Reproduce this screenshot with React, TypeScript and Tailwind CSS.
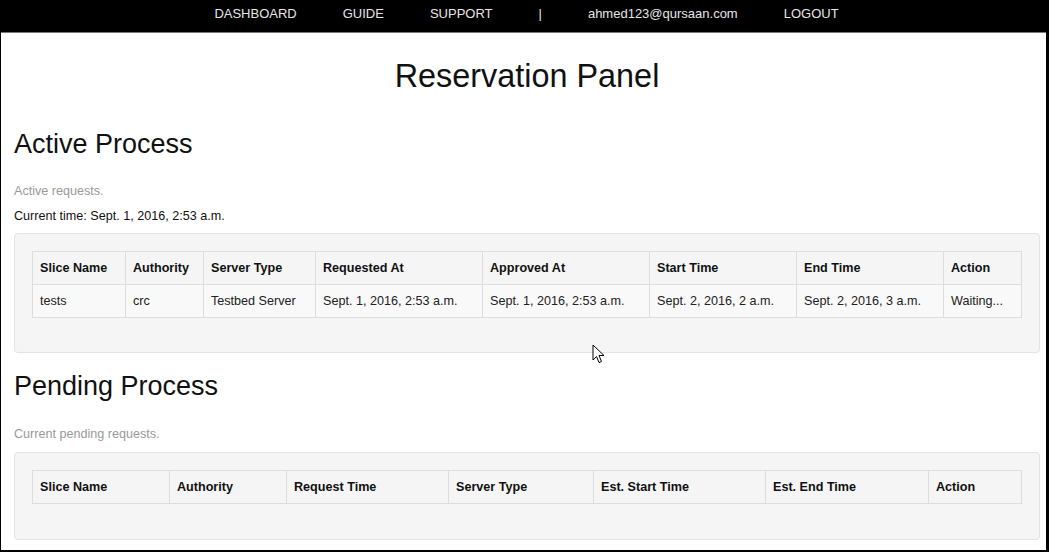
import React from 'react';

const navItems = ['DASHBOARD', 'GUIDE', 'SUPPORT', '|', 'ahmed123@qursaan.com', 'LOGOUT'];

const activeCols = [
    { label: 'Slice Name', w: 'w-[93px]' },
    { label: 'Authority', w: 'w-[78px]' },
    { label: 'Server Type', w: 'w-[112px]' },
    { label: 'Requested At', w: 'w-[167px]' },
    { label: 'Approved At', w: 'w-[167px]' },
    { label: 'Start Time', w: 'w-[147px]' },
    { label: 'End Time', w: 'w-[147px]' },
    { label: 'Action', w: 'w-[78px]' },
];

const activeRows = [
    ['tests', 'crc', 'Testbed Server', 'Sept. 1, 2016, 2:53 a.m.', 'Sept. 1, 2016, 2:53 a.m.', 'Sept. 2, 2016, 2 a.m.', 'Sept. 2, 2016, 3 a.m.', 'Waiting...'],
];

const pendingCols = [
    { label: 'Slice Name', w: 'w-[137px]' },
    { label: 'Authority', w: 'w-[117px]' },
    { label: 'Request Time', w: 'w-[162px]' },
    { label: 'Server Type', w: 'w-[145px]' },
    { label: 'Est. Start Time', w: 'w-[172px]' },
    { label: 'Est. End Time', w: 'w-[163px]' },
    { label: 'Action', w: 'w-[93px]' },
];

type Col = { label: string; w: string };

const DataTable = ({ cols, rows }: { cols: Col[]; rows: string[][] }) => (
    <table className="table-fixed border-collapse w-[989px] text-[12.6px] leading-[18px]">
        <colgroup>
            {cols.map((c) => (
                <col key={c.label} className={c.w} />
            ))}
        </colgroup>
        <thead>
            <tr>
                {cols.map((c) => (
                    <th key={c.label} className="border border-[#dddddd] text-left font-bold px-[7px] py-[7px] text-[#111]">
                        {c.label}
                    </th>
                ))}
            </tr>
        </thead>
        <tbody>
            {rows.map((r, i) => (
                <tr key={i} className="bg-[#f9f9f9]">
                    {r.map((cell, j) => (
                        <td key={j} className="border border-[#dddddd] px-[7px] py-[7px] text-[#222] whitespace-nowrap">
                            {cell}
                        </td>
                    ))}
                </tr>
            ))}
        </tbody>
    </table>
);

export default function App() {
    return (
        <div className="relative w-[1049px] h-[552px] overflow-hidden bg-white border-l border-r-[3px] border-b-2 border-black font-['Liberation_Sans',Arial,sans-serif] text-[#222]">
            {/* ---top nav-------- */}
            <div className="h-[33px] bg-black border-b border-[#777] flex justify-center items-start pt-[5px] pl-[6px] gap-[46px] text-[13px] leading-[18px] text-[#e6e6e6]">
                {navItems.map((item) => (
                    <span key={item}>{item}</span>
                ))}
            </div>

            {/* ---body-------- */}
            <div className="pl-[13px] pr-[6px]">
                <h1 className="mt-[25px] text-center text-[32.4px] leading-[36px] text-[#111]">Reservation Panel</h1>

                <h2 className="mt-[35px] text-[27px] leading-[30px] text-[#111]">Active Process</h2>
                <p className="mt-[23px] text-[12.6px] leading-[18px] text-[#999]">Active requests.</p>
                <p className="mt-[7px] text-[12.6px] leading-[18px] text-[#111]">Current time: Sept. 1, 2016, 2:53 a.m.</p>

                <div className="mt-[8px] bg-[#f5f5f5] border border-[#e3e3e3] rounded-[4px] pt-[17px] pl-[17px] pr-[18px] pb-[34px]">
                    <DataTable cols={activeCols} rows={activeRows} />
                </div>

                <h2 className="mt-[18px] text-[27px] leading-[30px] text-[#111]">Pending Process</h2>
                <p className="mt-[24px] text-[12.6px] leading-[18px] text-[#999]">Current pending requests.</p>

                <div className="mt-[9px] bg-[#f5f5f5] border border-[#e3e3e3] rounded-[4px] pt-[17px] pl-[17px] pr-[18px] pb-[35px]">
                    <DataTable cols={pendingCols} rows={[]} />
                </div>
            </div>

            {/* ---mouse pointer-------- */}
            <svg className="absolute left-[591px] top-[344px]" width="13" height="20" viewBox="0 0 13 20">
                <path d="M1 1 L1 16 L4.5 12.5 L7 18.5 L9.5 17.5 L7 11.5 L12 11.5 Z" fill="#fff" stroke="#000" strokeWidth="1" strokeLinejoin="round" />
            </svg>
        </div>
    );
}
